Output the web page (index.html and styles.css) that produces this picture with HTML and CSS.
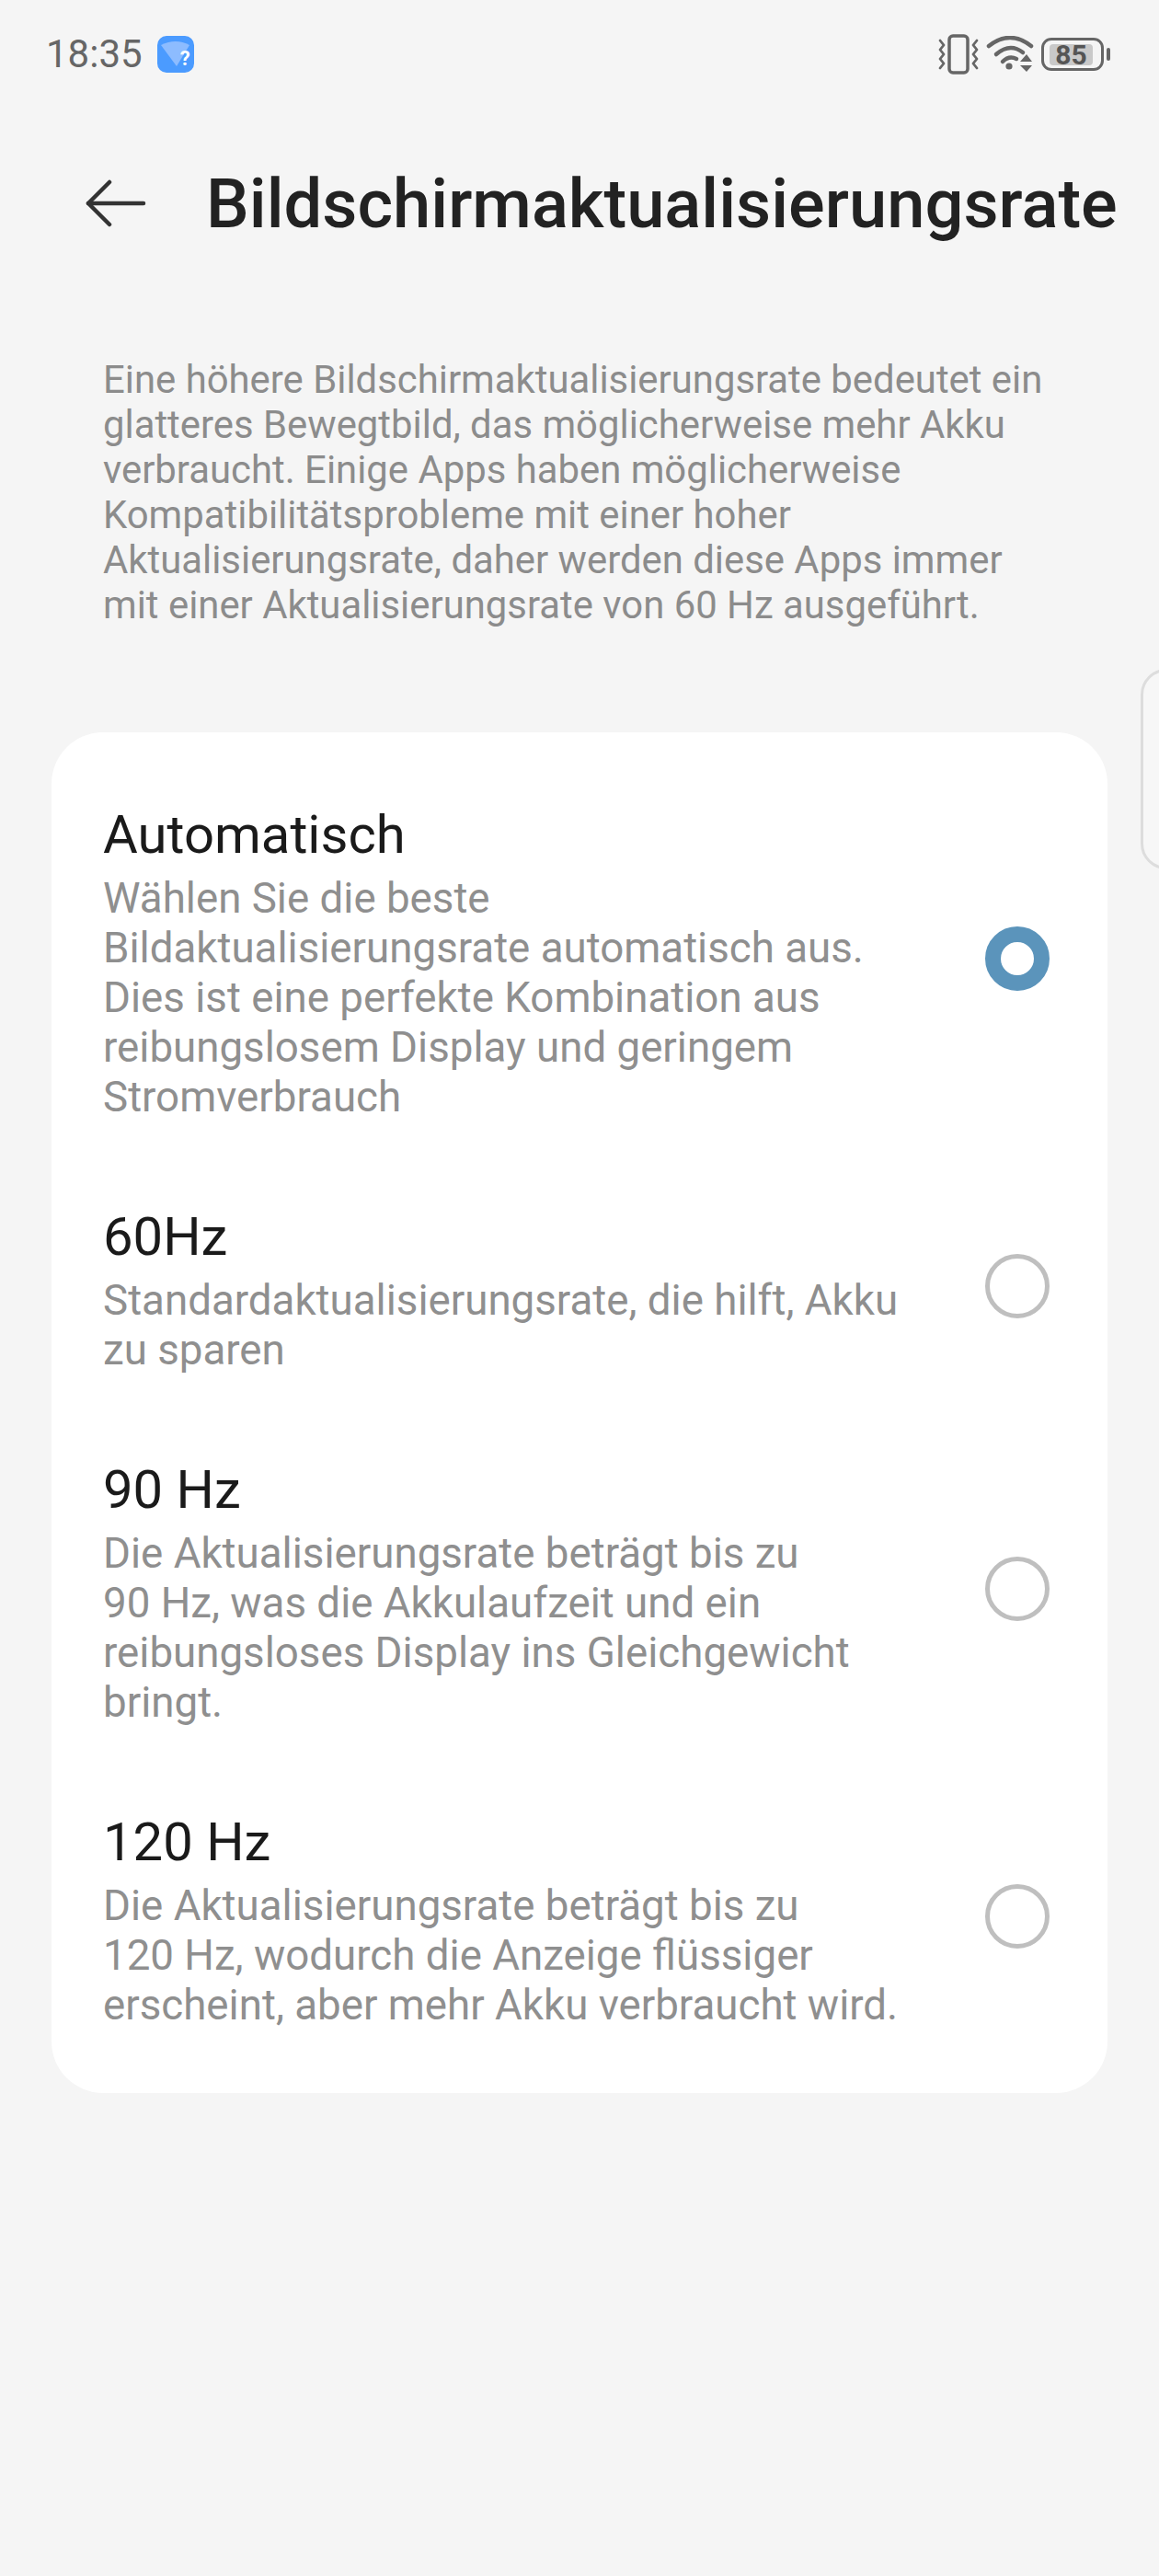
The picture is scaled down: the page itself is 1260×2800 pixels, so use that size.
FILE: index.html
```html
<!DOCTYPE html>
<html lang="de">
<head>
	<meta charset="UTF-8">
	<title>Bildschirmaktualisierungsrate</title>
	<link rel="stylesheet" href="styles.css">
</head>
<body>
	<div class="status_bar">
		<div class="status_left">
			<span class="time">18:35</span>
			<span class="app_icon">
				<svg width="40" height="40" viewBox="0 0 40 40">
					<path d="M4 10 Q20 2 35 10 L21 33 Z" fill="#8dbcff"/>
				</svg>
				<span class="app_icon_mark">?</span>
			</span>
		</div>
		<div class="status_right">
			<svg class="vibrate" width="44" height="44" viewBox="0 0 44 44" fill="none" stroke="#666" stroke-linecap="round" stroke-linejoin="round">
				<rect x="12" y="2" width="20" height="40" rx="4" stroke-width="3.5"/>
				<path d="M2 7 L6 12 L2 17 L6 22 L2 27 L6 32 L2 37" stroke-width="2.8"/>
				<path d="M42 7 L38 12 L42 17 L38 22 L42 27 L38 32 L42 37" stroke-width="2.8"/>
			</svg>
			<svg class="wifi" width="52" height="40" viewBox="0 0 52 40" fill="none" stroke="#666" stroke-width="4.5" stroke-linecap="round">
				<path d="M3 11 Q26 -7 49 11"/>
				<path d="M11 20 Q26 7 40 18"/>
				<path d="M18 28 Q25 21 33 25"/>
				<circle cx="25" cy="33" r="3.6" fill="#666" stroke="none"/>
				<path d="M37 28 L44 20 L50 28 Z" fill="#666" stroke="none"/>
				<path d="M37 32 L50 32 L44 39 Z" fill="#666" stroke="none"/>
			</svg>
			<div class="battery">
				<div class="battery_body">
					<span class="battery_level">85</span>
				</div>
				<span class="battery_nub"></span>
			</div>
		</div>
	</div>

	<div class="title_bar">
		<svg class="back" width="66" height="52" viewBox="0 0 66 52" fill="none" stroke="#333" stroke-width="4.5" stroke-linecap="round" stroke-linejoin="round">
			<path d="M3 26 L63 26"/>
			<path d="M26 3 L3 26 L26 49"/>
		</svg>
		<h1 class="page_title">Bildschirmaktualisierungsrate</h1>
	</div>

	<p class="intro">Eine höhere Bildschirmaktualisierungsrate bedeutet ein<br>glatteres Bewegtbild, das möglicherweise mehr Akku<br>verbraucht. Einige Apps haben möglicherweise<br>Kompatibilitätsprobleme mit einer hoher<br>Aktualisierungsrate, daher werden diese Apps immer<br>mit einer Aktualisierungsrate von 60 Hz ausgeführt.</p>

	<div class="card">
		<div class="option">
			<div class="option_text">
				<div class="option_title">Automatisch</div>
				<div class="option_sub">Wählen Sie die beste<br>Bildaktualisierungsrate automatisch aus.<br>Dies ist eine perfekte Kombination aus<br>reibungslosem Display und geringem<br>Stromverbrauch</div>
			</div>
			<span class="radio radio_on"></span>
		</div>
		<div class="option">
			<div class="option_text">
				<div class="option_title">60Hz</div>
				<div class="option_sub">Standardaktualisierungsrate, die hilft, Akku<br>zu sparen</div>
			</div>
			<span class="radio"></span>
		</div>
		<div class="option">
			<div class="option_text">
				<div class="option_title">90 Hz</div>
				<div class="option_sub">Die Aktualisierungsrate beträgt bis zu<br>90 Hz, was die Akkulaufzeit und ein<br>reibungsloses Display ins Gleichgewicht<br>bringt.</div>
			</div>
			<span class="radio"></span>
		</div>
		<div class="option">
			<div class="option_text">
				<div class="option_title">120 Hz</div>
				<div class="option_sub">Die Aktualisierungsrate beträgt bis zu<br>120 Hz, wodurch die Anzeige flüssiger<br>erscheint, aber mehr Akku verbraucht wird.</div>
			</div>
			<span class="radio"></span>
		</div>
	</div>

	<div class="edge_handle"></div>
</body>
</html>
```

FILE: styles.css
```css
html,body{
	margin: 0;
	padding: 0;
}
body{
	position: relative;
	width: 1260px;
	height: 2800px;
	overflow: hidden;
	background: #f5f5f5;
	font-family: "Roboto", "Liberation Sans", sans-serif;
}
.status_bar{
	display: flex;
	justify-content: space-between;
	align-items: center;
	height: 44px;
	padding: 37px 53px 0 50px;
}
.status_left{
	display: flex;
	align-items: center;
	gap: 16px;
}
.time{
	font-size: 42px;
	line-height: 44px;
	color: #666;
}
.app_icon{
	position: relative;
	display: block;
	width: 40px;
	height: 40px;
	border-radius: 10px;
	background: #4b9bff;
}
.app_icon svg{
	display: block;
}
.app_icon_mark{
	position: absolute;
	right: 4px;
	bottom: 5px;
	font-size: 22px;
	line-height: 20px;
	font-weight: 700;
	color: #fff;
}
.status_right{
	display: flex;
	align-items: center;
	gap: 8px;
}
.battery{
	display: flex;
	align-items: center;
	gap: 3px;
}
.battery_body{
	display: flex;
	align-items: center;
	box-sizing: border-box;
	width: 68px;
	height: 36px;
	padding: 3px 9px 3px 6px;
	border: 3.5px solid #666;
	border-radius: 11px;
}
.battery_level{
	flex: 1;
	height: 23px;
	border-radius: 4px;
	background: #c9c9c9;
	font-size: 30px;
	line-height: 23px;
	font-weight: 700;
	text-align: center;
	color: #555;
}
.battery_nub{
	width: 4px;
	height: 14px;
	border-radius: 2px;
	background: #666;
}
.title_bar{
	display: flex;
	align-items: center;
	height: 100px;
	margin-top: 90px;
	padding-left: 93px;
}
.page_title{
	margin: 2px 0 0 65px;
	font-size: 74.1px;
	line-height: 100px;
	font-weight: 500;
	color: #222;
	white-space: nowrap;
}
.intro{
	margin: 117px 0 0 112px;
	font-size: 41.85px;
	line-height: 49px;
	color: #8c8c8c;
}
.card{
	box-sizing: border-box;
	width: 1148px;
	margin: 0 0 0 56px;
	position: absolute;
	top: 796px;
	padding: 27px 0 28px;
	border-radius: 56px;
	background: #fff;
}
.option{
	display: flex;
	align-items: center;
	padding: 48px 63px 40px 56px;
}
.option_text{
	flex: 1;
}
.option_title{
	font-size: 58px;
	line-height: 72px;
	color: #1a1a1a;
	margin-bottom: 7px;
}
.option_sub{
	font-size: 45.7px;
	line-height: 54px;
	color: #8f8f8f;
}
.radio{
	box-sizing: border-box;
	flex: none;
	width: 70px;
	height: 70px;
	margin-bottom: 8px;
	border: 5px solid #bfbfbf;
	border-radius: 50%;
}
.radio_on{
	border: 17.5px solid #5b94bb;
}
.edge_handle{
	position: absolute;
	top: 727px;
	left: 1240px;
	width: 60px;
	height: 218px;
	box-sizing: border-box;
	border: 3px solid #ddd;
	border-radius: 28px;
	background: #f7f7f7;
}
```
